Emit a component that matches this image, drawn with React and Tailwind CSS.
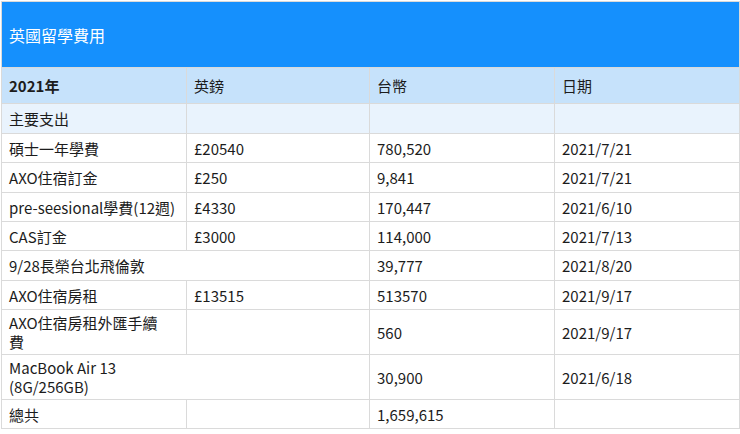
import React from 'react';

const rows = [
  { h: 'h-[29px]', cells: ['碩士一年學費', '£20540', '780,520', '2021/7/21'] },
  { h: 'h-[30px]', cells: ['AXO住宿訂金', '£250', '9,841', '2021/7/21'] },
  { h: 'h-[29px]', cells: ['pre-seesional學費(12週)', '£4330', '170,447', '2021/6/10'] },
  { h: 'h-[29px]', cells: ['CAS訂金', '£3000', '114,000', '2021/7/13'] },
  { h: 'h-[30px]', span: true, cells: ['9/28長榮台北飛倫敦', '39,777', '2021/8/20'] },
  { h: 'h-[29px]', cells: ['AXO住宿房租', '£13515', '513570', '2021/9/17'] },
  { h: 'h-[45px]', cells: [<>AXO住宿房租外匯手續<br />費</>, '', '560', '2021/9/17'] },
  { h: 'h-[45px]', span: true, cells: [<>MacBook Air 13<br />(8G/256GB)</>, '30,900', '2021/6/18'] },
  { h: 'h-[29px]', cells: ['總共', '', '1,659,615', ''] },
];

const cell = 'border border-[#dadada] px-[7px] align-middle leading-[19px] whitespace-nowrap';

const App = () => {
  return (
    <div className="w-[740px] h-[434px] bg-white pt-px pl-px" style={{ fontFamily: '"Noto Sans CJK TC", "Noto Sans", sans-serif' }}>
      <table className="w-[738px] table-fixed border-collapse text-[15px] text-[#1c1c1c]">
        <colgroup>
          <col className="w-[185px]" />
          <col className="w-[183px]" />
          <col className="w-[185px]" />
          <col className="w-[185px]" />
        </colgroup>
        <tbody>
          {/* title bar */}
          <tr className="h-[66px]">
            <td colSpan={4} className="border border-[#dadada] bg-[#1590fd] px-[7px] text-[16px] text-white">
              英國留學費用
            </td>
          </tr>

          {/* column header */}
          <tr className="h-[36px] bg-[#c6e2fb]">
            <td className={`${cell} font-bold`}>2021年</td>
            <td className={cell}>英鎊</td>
            <td className={cell}>台幣</td>
            <td className={cell}>日期</td>
          </tr>

          <tr className="h-[30px] bg-[#e9f3fd]">
            <td className={cell}>主要支出</td>
            <td className={cell}></td>
            <td className={cell}></td>
            <td className={cell}></td>
          </tr>

          {rows.map((row, i) => (
            <tr key={i} className={row.h}>
              {row.span ? (
                <>
                  <td colSpan={2} className={cell}>{row.cells[0]}</td>
                  <td className={cell}>{row.cells[1]}</td>
                  <td className={cell}>{row.cells[2]}</td>
                </>
              ) : (
                row.cells.map((c, j) => (
                  <td key={j} className={cell}>{c}</td>
                ))
              )}
            </tr>
          ))}
        </tbody>
      </table>
    </div>
  );
};

export default App;
